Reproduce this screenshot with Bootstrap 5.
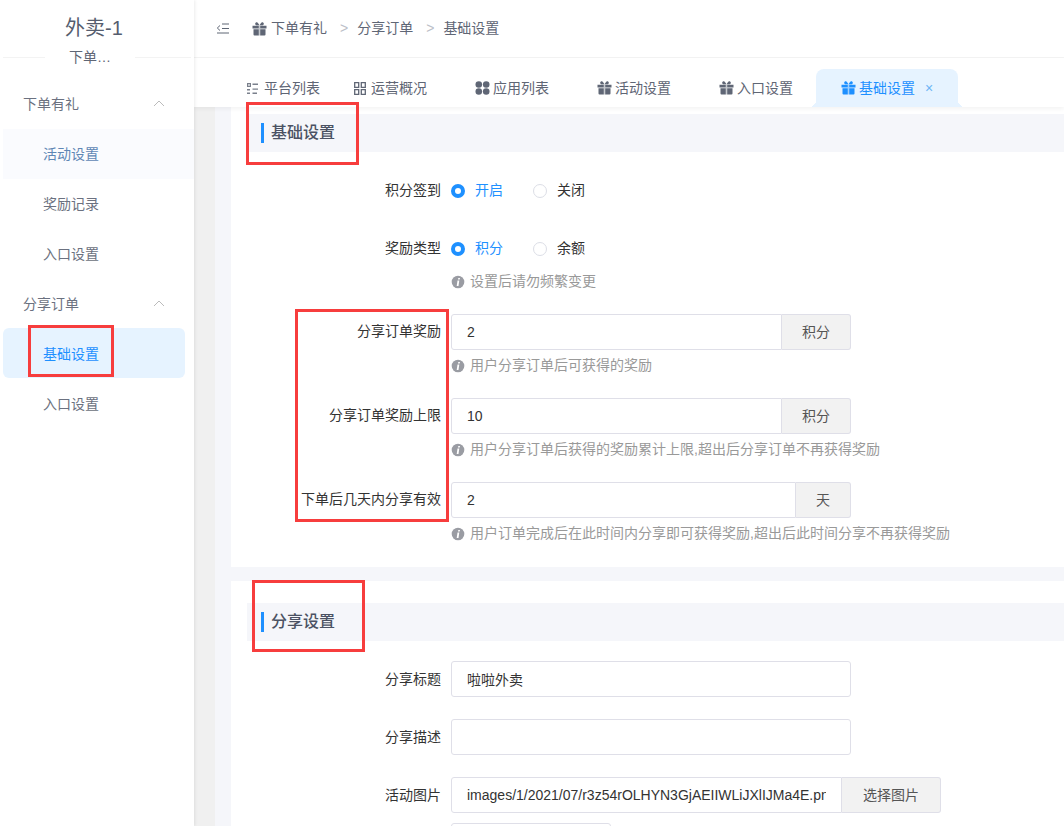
<!DOCTYPE html>
<html lang="zh"><head><meta charset="utf-8"><title>基础设置</title>
<link href="https://cdn.jsdelivr.net/npm/bootstrap@5.3.0/dist/css/bootstrap.min.css" rel="stylesheet">
<style>
html,body{height:826px;overflow:hidden}
body{font-family:"Liberation Sans","Noto Sans CJK SC",sans-serif;font-size:14px;color:#333;background:#f0f0f0;position:relative}
.app-side{width:194px;height:826px;background:#fff;flex:none;box-shadow:1px 0 3px rgba(0,0,0,.08);position:relative;z-index:3}
.brand{height:57px;font-size:20px;color:#555d6e;text-align:center;line-height:57px;padding-right:6px}
.brand-sub{border-top:1px solid #f3f3f3;margin:0 3px 0 3px;height:22px;text-align:center}
.brand-sub span{display:inline-block;background:#fff;width:90px;line-height:20px;color:#5f6675;position:relative;top:-11px;margin-right:14px}
.side-group{height:50px;padding:0 29px 0 23px;color:#6b7180;display:flex;align-items:center;justify-content:space-between}
.side-group svg{margin-bottom:2px}
.side-item{height:50px;margin:0 9px 0 3px;padding-left:40px;color:#6b7180;display:flex;align-items:center;border-radius:6px}
.side-item.cur{background:#e6f3ff;color:#1e90ff;margin-top:-1px;margin-bottom:1px;padding-top:2px}
.side-item.soft{background:#fafbfe;color:#5f87b5;margin-right:0;border-radius:0}
.main-col{flex:1;min-width:0;height:826px;display:flex;flex-direction:column}
.top-bar{height:58px;background:#fff;border-bottom:1px solid #f3f3f3;padding-left:22px;color:#5f6675;flex:none;font-size:14px}
.crumb-sep{color:#bcc0c8;margin:0 9px 0 13px;font-family:"Liberation Sans",sans-serif}
.tog{margin-right:23px}
.gift-crumb{margin-right:4px;color:#5f6675}
.tab-bar{height:49px;background:#fff;flex:none;box-shadow:0 2px 4px rgba(0,0,0,.05);position:relative;z-index:2;padding-left:53px;padding-top:11px;color:#5f6675}
.tab-it{height:38px;display:flex;align-items:center;gap:3px;flex:none;position:relative}
.tab-it svg{flex:none}
.t1{width:107px;gap:6px}.t2{width:121px;gap:5px}.t3{width:122px}.t4{width:122px}.t5{width:97px}
.tab-it.on{width:142px;background:#e6f3ff;color:#1e90ff;border-radius:8px 8px 0 0;padding-left:25px}
.tab-it.on:before,.tab-it.on:after{content:"";position:absolute;bottom:0;width:7px;height:7px;background:radial-gradient(circle at 0 0,transparent 7px,#e6f3ff 7px)}
.tab-it.on:before{left:-7px}
.tab-it.on:after{right:-7px;background:radial-gradient(circle at 100% 0,transparent 7px,#e6f3ff 7px)}
.tab-x{margin-left:7px;font-size:14px;color:#6db3f5}
.work{flex:1;min-height:0;overflow:hidden;margin-left:21px;background:#f5f6fa;padding-left:16px}
.pane{background:#fff;padding:7px 0 0 16px;height:460px;margin-bottom:14px}
.pane.two{padding-top:22px;height:400px;margin:0}
.band{height:38px;background:#f5f6fa;display:flex;align-items:center;padding-left:14px;font-size:16px;font-weight:500;color:#4b5263;margin-bottom:21px}
.pane.two .band{margin-bottom:20px}
.band i{display:block;width:3px;height:20px;background:#1e90ff;margin-right:7px}
.f-row{display:flex;align-items:flex-start;margin-bottom:23px}
.two .f-row{margin-bottom:22px}
.two .f-row.near{margin-bottom:10px}
.f-lab{width:204px;flex:none;text-align:right;padding-right:10px;line-height:35px;color:#333;white-space:nowrap}
.two .f-lab{line-height:36px}
.f-body{width:400px;flex:none}
.f-body.wide{width:490px}
.rad{height:35px;display:flex;align-items:center;gap:30px}
.rad-o{display:flex;align-items:center;gap:10px;width:52px;white-space:nowrap}
.rad-o.on{color:#1e90ff}
.dot{width:14px;height:14px;border-radius:50%;border:1px solid #dcdee6;background:#fff;flex:none}
.on .dot{border:4px solid #1e90ff}
.fld{height:36px;border:1px solid #dfdfe8;border-radius:3px;background:#fff;padding:0 15px;font-size:14px;color:#333;width:100%;outline:0;min-width:0;font-family:inherit}
.joined{display:flex}
.joined .fld{border-radius:3px 0 0 3px;flex:1}
.addon{height:36px;flex:none;border:1px solid #dfdfe8;border-left:0;background:#f2f2f2;color:#555;display:flex;align-items:center;justify-content:center;border-radius:0 3px 3px 0}
.w70{width:69px}.w56{width:55px}.w100{width:99px}
.hint{display:flex;align-items:center;gap:5px;height:20px;margin-top:5px;color:#999;font-size:14px;white-space:nowrap;line-height:20px}
.hint svg{flex:none;margin-top:1px}
.redbox{position:absolute;border:3px solid #f73d3d;z-index:9;pointer-events:none}
.r1{left:246px;top:102px;width:113px;height:63px}
.r2{left:28px;top:325px;width:86px;height:52px}
.r3{left:295px;top:309px;width:154px;height:213px}
.r4{left:252px;top:580px;width:113px;height:72px}
.sum-short{width:160px}
.after-short{margin-left:4px;color:#666}
</style></head><body>
<svg width="0" height="0" class="position-absolute"><defs>
<symbol id="gift" viewBox="0 0 14 14"><path fill="currentColor" d="M0 3.800h6.300v2.700H0zM7.700 3.800H14v2.700H7.700zM1 7.300h5.300V13.500H2a1 1 0 0 1-1-1zM7.700 7.300H13v5.200a1 1 0 0 1-1 1H7.700zM7 3.300 5.300.8C4.600-.2 2.700.3 2.700 1.700c0 1 .8 1.600 1.800 1.600zM7 3.300 8.700.8c.7-1 2.600-.5 2.600.9 0 1-.8 1.600-1.800 1.600z"/><path fill="currentColor" opacity=".35" d="M6.300 3.800h1.400v9.700H6.300z"/></symbol>
<symbol id="info" viewBox="0 0 14 14"><circle cx="7" cy="7" r="6.300" fill="#9a9ca3"/><path fill="#fff" d="M7.300 3h1.700l-.3 1.600H7zM6.500 5.600h1.800L7.500 11H5.700z"/></symbol>
</defs></svg>
<div class="d-flex">
<aside class="app-side">
<div class="brand">外卖-1</div>
<div class="brand-sub"><span>下单…</span></div>
<div class="side-group">下单有礼<svg width="12" height="7" viewBox="0 0 12 7"><path d="M1 6l5-5 5 5" fill="none" stroke="#bbb"/></svg></div>
<div class="side-item soft">活动设置</div>
<div class="side-item">奖励记录</div>
<div class="side-item">入口设置</div>
<div class="side-group">分享订单<svg width="12" height="7" viewBox="0 0 12 7"><path d="M1 6l5-5 5 5" fill="none" stroke="#bbb"/></svg></div>
<div class="side-item cur">基础设置</div>
<div class="side-item">入口设置</div>
</aside>
<div class="main-col">
<div class="top-bar d-flex align-items-center">
<svg width="13" height="11" viewBox="0 0 13 11" class="tog"><path d="M6 1h7M6 5.500h7M1 10h12M4 2.500 1.300 5 4 7.500" fill="none" stroke="#5f6675"/></svg>
<svg width="15" height="14" class="gift-crumb"><use href="#gift"/></svg><span>下单有礼</span><span class="crumb-sep">&gt;</span><span>分享订单</span><span class="crumb-sep">&gt;</span><span>基础设置</span>
</div>
<div class="tab-bar d-flex">
<div class="tab-it t1"><svg width="11" height="11" viewBox="0 0 11 11"><path fill="#7a808c" d="M0 0h4v1.200H0zM0 2.800h4V4H0zM0 1h1.200v2H0zM2.800 1H4v2H2.800zM0 6h3v1.500H0zM0 9.500h3V11H0zM5.500 .6H11v1.300H5.500zM5.500 5.500H11v1.300H5.500zM5.500 9.500H10V11H5.500z"/></svg>平台列表</div>
<div class="tab-it t2"><svg width="12" height="13" viewBox="0 0 12 13"><path fill="none" stroke="#5f6675" stroke-width="1.300" d="M.7.7h4v4.600h-4zM7.300.7h4v4.600h-4zM.7 7.700h4v4.600h-4zM7.300 7.700h4v4.600h-4z"/></svg>运营概况</div>
<div class="tab-it t3"><svg width="15" height="14" viewBox="0 0 15 14"><g fill="#5f6675"><circle cx="3.800" cy="3.500" r="3.300"/><circle cx="11.200" cy="3.500" r="3.300"/><circle cx="3.800" cy="10.500" r="3.300"/><circle cx="11.200" cy="10.500" r="3.300"/></g></svg>应用列表</div>
<div class="tab-it t4"><svg width="15" height="14"><use href="#gift"/></svg>活动设置</div>
<div class="tab-it t5"><svg width="15" height="14"><use href="#gift"/></svg>入口设置</div>
<div class="tab-it on"><svg width="15" height="14"><use href="#gift"/></svg>基础设置<span class="tab-x">×</span></div>
</div>
<div class="work">
<section class="pane">
<div class="band"><i></i>基础设置</div>
<div class="f-row"><div class="f-lab">积分签到</div><div class="f-body"><div class="rad"><span class="rad-o on"><span class="dot"></span>开启</span><span class="rad-o"><span class="dot"></span>关闭</span></div></div></div>
<div class="f-row"><div class="f-lab">奖励类型</div><div class="f-body"><div class="rad"><span class="rad-o on"><span class="dot"></span>积分</span><span class="rad-o"><span class="dot"></span>余额</span></div>
<div class="hint"><svg width="14" height="14"><use href="#info"/></svg>设置后请勿频繁变更</div></div></div>
<div class="f-row"><div class="f-lab">分享订单奖励</div><div class="f-body"><div class="joined"><input class="fld" value="2"><span class="addon w70">积分</span></div><div class="hint"><svg width="14" height="14"><use href="#info"/></svg>用户分享订单后可获得的奖励</div></div></div>
<div class="f-row"><div class="f-lab">分享订单奖励上限</div><div class="f-body"><div class="joined"><input class="fld" value="10"><span class="addon w70">积分</span></div><div class="hint"><svg width="14" height="14"><use href="#info"/></svg>用户分享订单后获得的奖励累计上限,超出后分享订单不再获得奖励</div></div></div>
<div class="f-row"><div class="f-lab">下单后几天内分享有效</div><div class="f-body"><div class="joined"><input class="fld" value="2"><span class="addon w56">天</span></div><div class="hint"><svg width="14" height="14"><use href="#info"/></svg>用户订单完成后在此时间内分享即可获得奖励,超出后此时间分享不再获得奖励</div></div></div>
</section>
<section class="pane two">
<div class="band"><i></i>分享设置</div>
<div class="f-row"><div class="f-lab">分享标题</div><div class="f-body"><input class="fld" value="啦啦外卖"></div></div>
<div class="f-row"><div class="f-lab">分享描述</div><div class="f-body"><input class="fld" value=""></div></div>
<div class="f-row near"><div class="f-lab">活动图片</div><div class="f-body wide"><div class="joined"><input class="fld" value="images/1/2021/07/r3z54rOLHYN3GjAEIIWLiJXlIJMa4E.png"><span class="addon w100">选择图片</span></div></div></div>
<div class="f-row"><div class="f-lab"></div><div class="f-body d-flex align-items-start"><input class="fld sum-short" value=""><span class="after-short">长</span></div></div>
</section>
</div>
</div>
</div>
<div class="redbox r1"></div><div class="redbox r2"></div><div class="redbox r3"></div><div class="redbox r4"></div>
<script src="https://cdn.jsdelivr.net/npm/bootstrap@5.3.0/dist/js/bootstrap.bundle.min.js"></script>
</body></html>
